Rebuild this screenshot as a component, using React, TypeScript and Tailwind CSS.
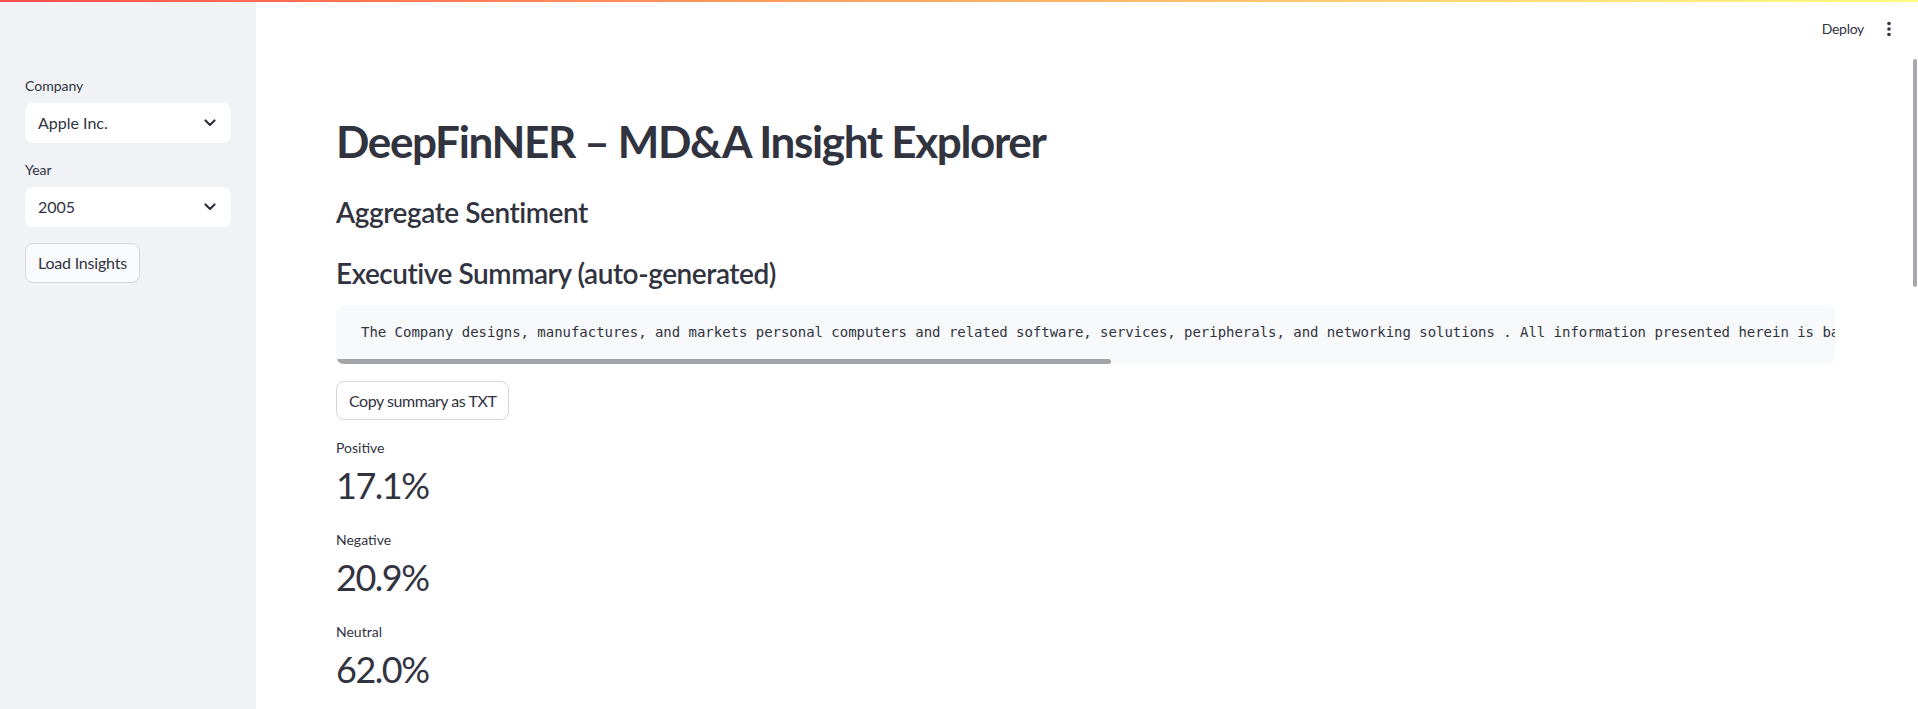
import React from 'react';

const summary =
  'The Company designs, manufactures, and markets personal computers and related software, services, peripherals, and networking solutions . All information presented herein is based on the Management Discussion and Analysis section of the annual filing for the selected fiscal year.';

const metrics = [
  { label: 'Positive', value: '17.1%' },
  { label: 'Negative', value: '20.9%' },
  { label: 'Neutral', value: '62.0%' },
];

const Chevron: React.FC = () => (
  <svg width="12" height="8" viewBox="0 0 12 8" fill="none">
    <path d="M1.5 1.5 L6 6 L10.5 1.5" stroke="#31333f" strokeWidth="2.2" strokeLinecap="round" strokeLinejoin="round" />
  </svg>
);

const SelectBox: React.FC<{ value: string }> = ({ value }) => (
  <div className="mt-[7px] h-[40px] w-full rounded-[8px] bg-white flex items-center justify-between pl-[13px] pr-[15px]">
    <span className="text-[16px] text-[#31333f]">{value}</span>
    <Chevron />
  </div>
);

export default function App() {
  return (
    <div className="relative flex h-[709px] w-full overflow-hidden bg-white text-[#31333f] font-['Source_Sans_Pro','Lato',sans-serif]">
      {/* top decoration */}
      <div className="absolute left-0 top-0 z-10 h-[2px] w-full bg-gradient-to-r from-[#ff4b4b] to-[#fffd80]" />

      {/* Sidebar */}
      <aside className="w-[256px] shrink-0 bg-[#f0f2f6] px-[25px] pt-[76px]">
        <div className="text-[14px] leading-[20px] h-[20px]">Company</div>
        <SelectBox value="Apple Inc." />
        <div className="mt-[17px] text-[14px] leading-[20px] h-[20px]">Year</div>
        <SelectBox value="2005" />
        <button className="mt-[16px] h-[40px] rounded-[8px] border border-[#d5d6d9] bg-[#f9fafb] px-[12px] text-[16px] tracking-[-0.2px] text-[#31333f]">
          Load Insights
        </button>
      </aside>

      {/* Main */}
      <main className="relative flex-1 min-w-0">
        <header className="flex h-[56px] items-center justify-end gap-[23px] pr-[27px] pt-[1px]">
          <span className="text-[14px] tracking-[-0.3px] text-[#31333f]">Deploy</span>
          <svg width="4" height="16" viewBox="0 0 4 16">
            <circle cx="2" cy="2.5" r="1.8" fill="#31333f" />
            <circle cx="2" cy="8" r="1.8" fill="#31333f" />
            <circle cx="2" cy="13.5" r="1.8" fill="#31333f" />
          </svg>
        </header>

        {/* page scrollbar thumb */}
        <div className="absolute right-[1px] top-[59px] h-[228px] w-[4px] rounded-full bg-[#a9a9ad]" />

        <div className="pl-[80px] pr-[83px] pt-[59px]">
          <h1 className="text-[44px] font-bold leading-[53px] tracking-[-1.35px]">DeepFinNER – MD&amp;A Insight Explorer</h1>
          <h3 className="mt-[27px] text-[28px] font-semibold leading-[34px] tracking-[-0.45px]">Aggregate Sentiment</h3>
          <h3 className="mt-[27px] text-[28px] font-semibold leading-[34px] tracking-[-0.45px]">Executive Summary (auto-generated)</h3>

          <div className="mt-[15px] flex flex-col overflow-hidden rounded-[8px] bg-[#f8f9fb] pt-[17px]">
            <div className="h-[20px] whitespace-pre pl-[25px] font-['DejaVu_Sans_Mono',monospace] text-[14px] leading-[20px] tracking-[-0.03px] text-[#31333f]">
              {summary}
            </div>
            <div className="mt-[17px] h-[5px] w-[775px] rounded-full bg-[#a3a4a9]" />
          </div>

          <button className="mt-[17px] h-[39px] rounded-[8px] border border-[#d5d6d9] bg-white px-[12px] text-[16px] tracking-[-0.45px] text-[#31333f]">
            Copy summary as TXT
          </button>

          <div className="mt-[18px] flex flex-col gap-[23px]">
            {metrics.map((m) => (
              <div key={m.label} className="flex flex-col">
                <div className="h-[20px] text-[14px] leading-[20px]">{m.label}</div>
                <div className="mt-[5px] text-[36px] leading-[44px] tracking-[-1.5px]">{m.value}</div>
              </div>
            ))}
          </div>
        </div>
      </main>
    </div>
  );
}
